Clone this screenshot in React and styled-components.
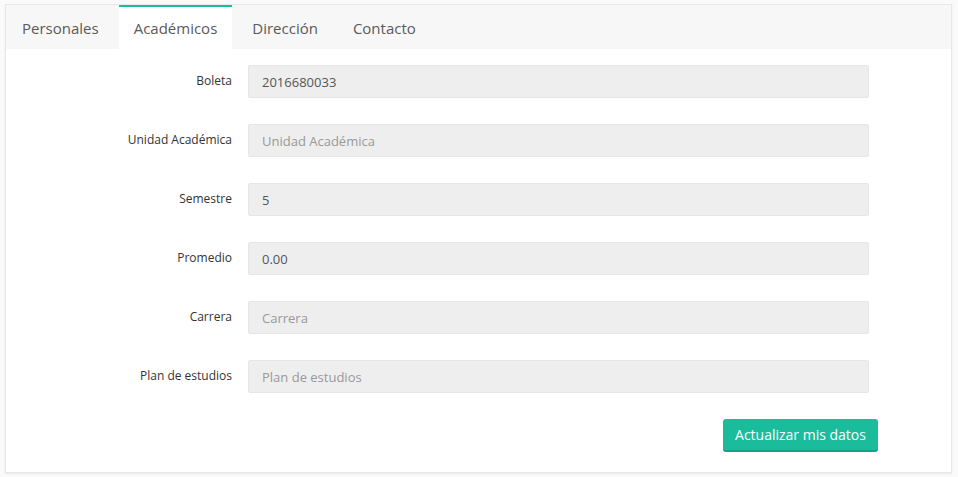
import React from "react";
import styled, { createGlobalStyle } from "styled-components";

const Global = createGlobalStyle`
  html, body { margin: 0; padding: 0; background: #fafafa; }
  body { font-family: "Open Sans", "Noto Sans", sans-serif; }
  * { box-sizing: border-box; }
`;

const Page = styled.div`
  padding: 4px 6px 4px 5px;
`;

const Panel = styled.div`
  background: #fff;
  border: 1px solid #e8e8e8;
  box-shadow: 0 1px 2px rgba(0, 0, 0, 0.07);
  height: 469px;
  display: flex;
  flex-direction: column;
`;

const TabBar = styled.div`
  display: flex;
  height: 44px;
  background: #f7f7f7;
  padding-left: 1px;
`;

const Tab = styled.div`
  display: flex;
  align-items: center;
  padding: 0 15px 1px;
  margin-right: 5px;
  font-size: 15px;
  color: #5a5a5a;
  background: ${(p) => (p.$active ? "#fff" : "transparent")};
  border-top: 2px solid ${(p) => (p.$active ? "#1abc9c" : "transparent")};
`;

const Body = styled.div`
  padding: 16px 0 20px;
  display: flex;
  flex-direction: column;
  gap: 26px;
`;

const Row = styled.div`
  display: grid;
  grid-template-columns: 226px 621px;
  column-gap: 16px;
  align-items: center;
`;

const Label = styled.label`
  text-align: right;
  font-size: 12px;
  color: #333;
  margin-top: -3px;
`;

const Input = styled.div`
  height: 33px;
  background: #eeeeee;
  border: 1px solid #e6e6e6;
  border-radius: 2px;
  padding: 0 13px;
  display: flex;
  align-items: center;
  font-size: 13px;
  color: ${(p) => (p.$placeholder ? "#999" : "#555")};
`;

const Footer = styled.div`
  display: flex;
  justify-content: flex-end;
  padding-right: 73px;
`;

const Button = styled.button`
  width: 155px;
  height: 33px;
  background: #1abc9c;
  border: none;
  border-bottom: 2px solid #16a085;
  border-radius: 3px;
  color: #fff;
  font-family: "Open Sans", "Noto Sans", sans-serif;
  font-size: 14px;
  padding: 0;
`;

const fields = [
  { label: "Boleta", value: "2016680033" },
  { label: "Unidad Académica", placeholder: "Unidad Académica" },
  { label: "Semestre", value: "5" },
  { label: "Promedio", value: "0.00" },
  { label: "Carrera", placeholder: "Carrera" },
  { label: "Plan de estudios", placeholder: "Plan de estudios" },
];

export default function App() {
  return (
    <Page>
      <Global />
      <Panel>
        <TabBar>
          <Tab>Personales</Tab>
          <Tab $active>Académicos</Tab>
          <Tab>Dirección</Tab>
          <Tab>Contacto</Tab>
        </TabBar>
        <Body>
          {fields.map((f) => (
            <Row key={f.label}>
              <Label>{f.label}</Label>
              <Input $placeholder={!f.value}>{f.value || f.placeholder}</Input>
            </Row>
          ))}
          <Footer>
            <Button>Actualizar mis datos</Button>
          </Footer>
        </Body>
      </Panel>
    </Page>
  );
}
